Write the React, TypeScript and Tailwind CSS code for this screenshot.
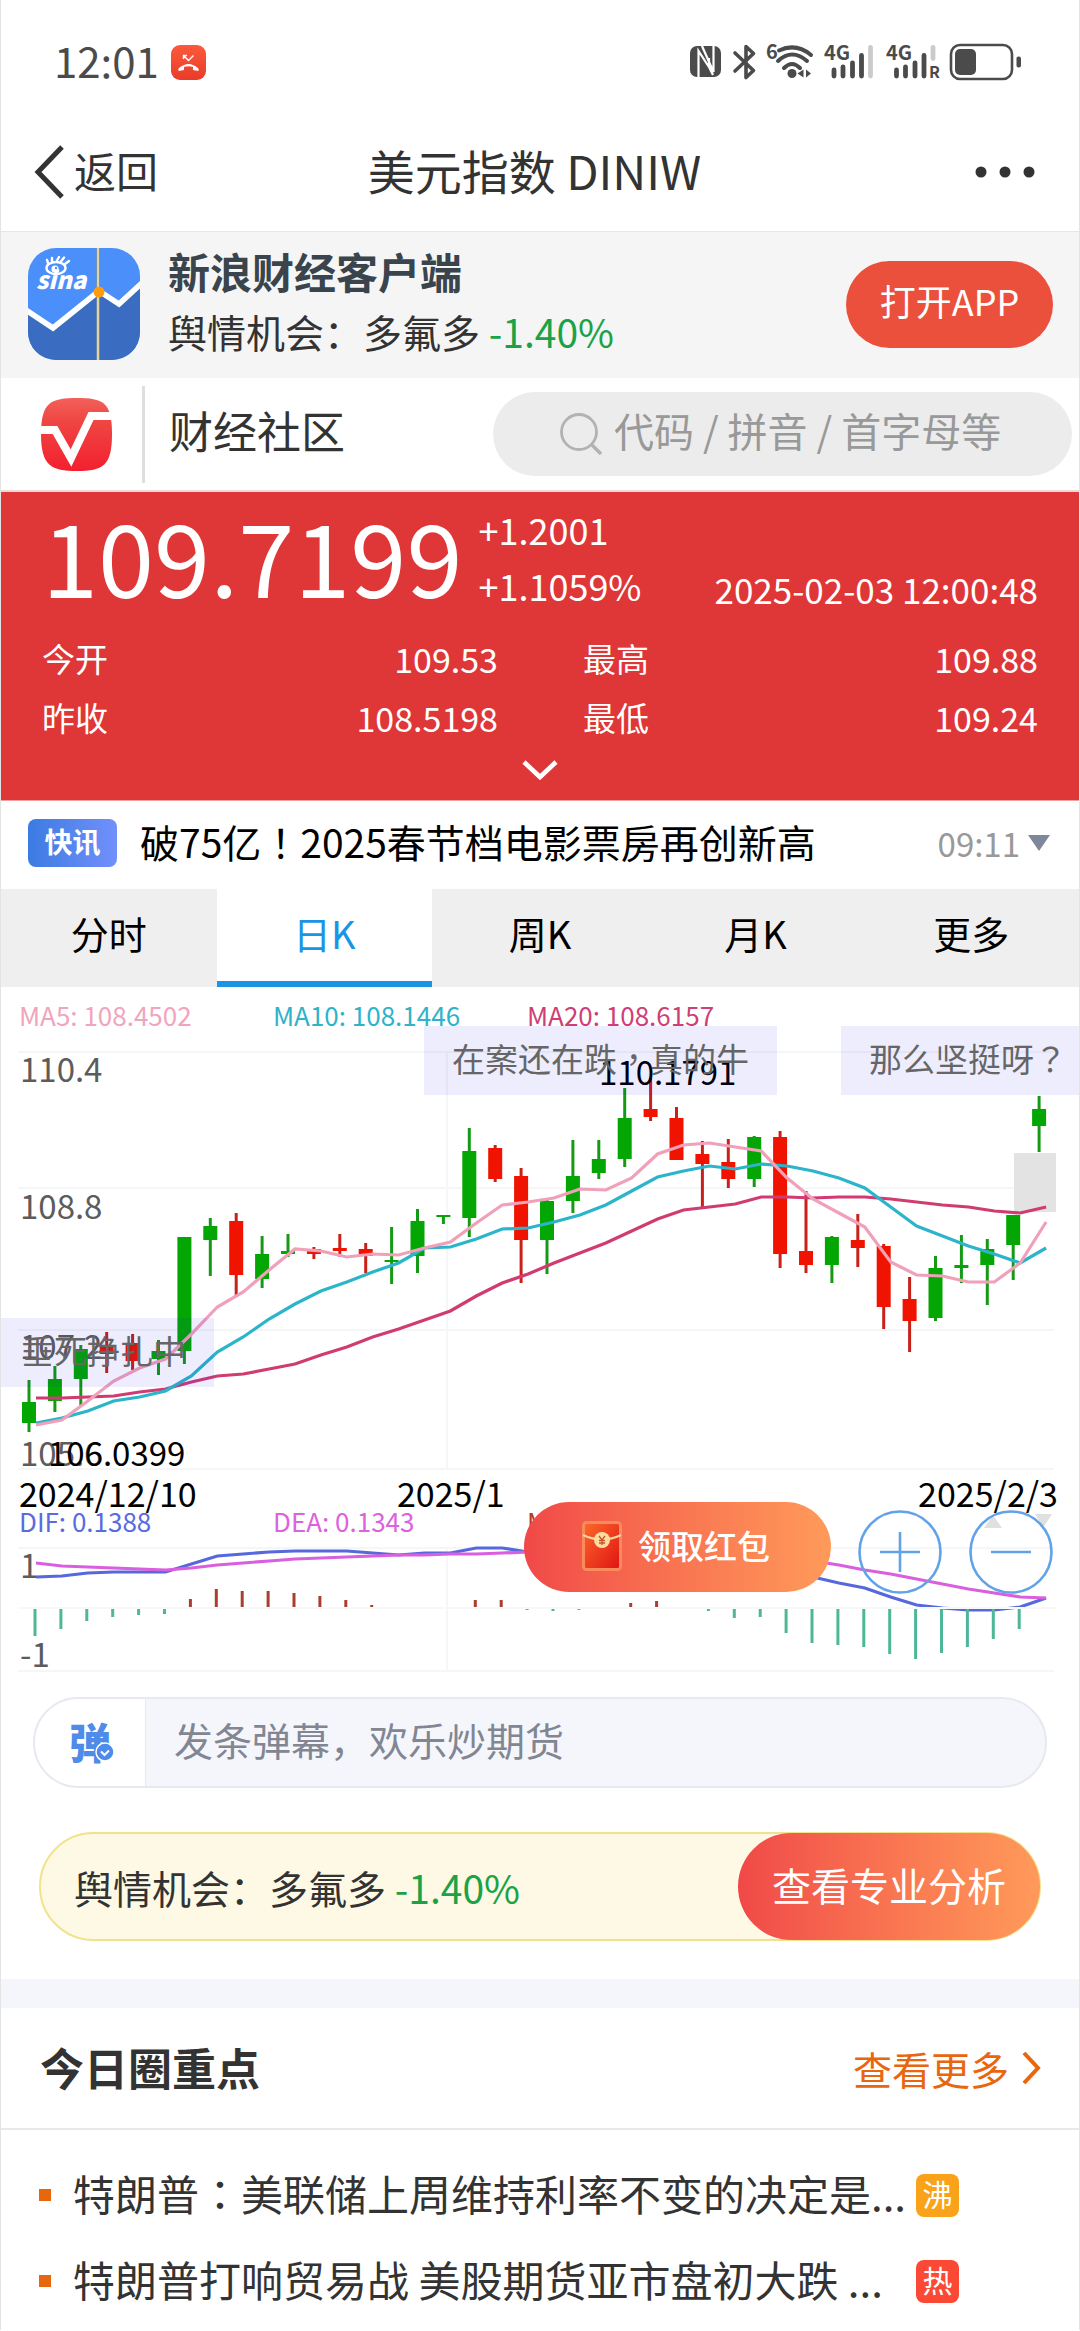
import { useState } from 'react';

type Candle = [color: 'up' | 'down', high: number, top: number, bottom: number, low: number];

const CANDLES: Candle[] = [
  ['up', 1380, 1402, 1423, 1432],
  ['up', 1366, 1379, 1401, 1412],
  ['up', 1345, 1349, 1379, 1405],
  ['down', 1332, 1345, 1354, 1373],
  ['down', 1334, 1343, 1361, 1370],
  ['up', 1340, 1351, 1359, 1375],
  ['up', 1237, 1237, 1351, 1364],
  ['up', 1218, 1226, 1240, 1276],
  ['down', 1213, 1221, 1275, 1297],
  ['up', 1236, 1254, 1279, 1288],
  ['up', 1234, 1251, 1254, 1257],
  ['down', 1247, 1249, 1254, 1259],
  ['down', 1234, 1248, 1251, 1257],
  ['down', 1243, 1249, 1256, 1273],
  ['up', 1227, 1260, 1262, 1284],
  ['up', 1209, 1221, 1256, 1273],
  ['up', 1215, 1215, 1217, 1224],
  ['up', 1128, 1151, 1218, 1237],
  ['down', 1145, 1148, 1179, 1182],
  ['down', 1168, 1176, 1240, 1283],
  ['up', 1200, 1201, 1240, 1274],
  ['up', 1140, 1176, 1201, 1213],
  ['up', 1140, 1159, 1173, 1179],
  ['up', 1088, 1118, 1159, 1167],
  ['down', 1078, 1109, 1117, 1121],
  ['down', 1107, 1118, 1160, 1160],
  ['down', 1141, 1154, 1164, 1208],
  ['down', 1139, 1162, 1179, 1188],
  ['up', 1136, 1137, 1179, 1187],
  ['down', 1131, 1137, 1254, 1268],
  ['down', 1191, 1251, 1265, 1273],
  ['up', 1236, 1237, 1265, 1283],
  ['down', 1214, 1240, 1248, 1267],
  ['down', 1244, 1246, 1307, 1329],
  ['down', 1277, 1299, 1321, 1352],
  ['up', 1256, 1268, 1318, 1321],
  ['up', 1235, 1265, 1268, 1283],
  ['up', 1239, 1249, 1265, 1305],
  ['up', 1215, 1215, 1245, 1280],
  ['up', 1096, 1109, 1126, 1152],
];

const MA5 = [1425, 1420, 1401, 1381, 1368, 1359, 1334, 1307, 1292, 1270, 1249, 1251, 1257, 1254, 1255, 1248, 1242, 1223, 1205, 1202, 1198, 1189, 1190, 1178, 1154, 1145, 1143, 1147, 1151, 1178, 1199, 1213, 1227, 1262, 1275, 1276, 1282, 1282, 1263, 1222];
const MA10 = [1423, 1418, 1411, 1401, 1397, 1391, 1376, 1352, 1337, 1319, 1304, 1291, 1282, 1272, 1263, 1248, 1247, 1239, 1229, 1228, 1222, 1215, 1205, 1191, 1177, 1171, 1166, 1169, 1164, 1166, 1171, 1178, 1188, 1207, 1226, 1236, 1246, 1254, 1263, 1248];
const MA20 = [1398, 1398, 1397, 1396, 1392, 1389, 1382, 1376, 1374, 1369, 1364, 1355, 1347, 1337, 1329, 1320, 1311, 1296, 1283, 1274, 1263, 1253, 1243, 1231, 1219, 1210, 1207, 1204, 1197, 1197, 1198, 1197, 1197, 1199, 1202, 1205, 1207, 1211, 1213, 1207];
const DIF = [1577, 1576, 1573, 1572, 1572, 1572, 1564, 1556, 1554, 1552, 1551, 1551, 1551, 1553, 1555, 1553, 1553, 1548, 1548, 1552, 1555, 1558, 1556, 1554, 1553, 1554, 1556, 1560, 1564, 1571, 1577, 1583, 1588, 1597, 1605, 1608, 1610, 1610, 1607, 1598];
const DEA = [1563, 1566, 1567, 1568, 1569, 1570, 1568, 1565, 1563, 1561, 1559, 1558, 1557, 1556, 1555, 1555, 1554, 1554, 1553, 1552, 1552, 1552, 1552, 1553, 1553, 1554, 1554, 1555, 1556, 1558, 1561, 1565, 1570, 1574, 1579, 1584, 1589, 1593, 1597, 1598];
const MACD = [-27, -20, -12, -8, -6, -5, 8, 18, 16, 16, 14, 11, 7, 2, 0, 0, 0, 7, 7, -1, -2, -1, 0, 4, 6, 0, -2, -9, -8, -24, -34, -36, -38, -45, -50, -44, -38, -30, -20, 0];

const STEP = 25.9;
const toPoints = (ys: number[]) => ys.map((y, i) => `${36 + i * STEP},${y}`).join(' ');

const TABS = ['分时', '日K', '周K', '月K', '更多'];

const NEWS = [
  { title: '特朗普：美联储上周维持利率不变的决定是...', tag: '沸', tagClass: 'bg-[#f9a21a]' },
  { title: '特朗普打响贸易战 美股期货亚市盘初大跌 ...', tag: '热', tagClass: 'bg-[#fb4936]' },
];

function StatusIcons() {
  return (
    <svg width="334" height="56" viewBox="0 -8 334 56" fill="none" aria-hidden="true">
      {/* NFC */}
      <rect x="1" y="4" width="31" height="31" rx="7" fill="#4b4b4b" />
      <path d="M9.500 35V9L20 25V16M13 4l11.500 26V4M20 25l4 8" stroke="#fff" strokeWidth="2.200" />
      {/* Bluetooth */}
      <path d="M46 11l18.500 17.500L57 35.500V4.500l7.500 7L46 29" stroke="#4b4b4b" strokeWidth="3.600" strokeLinejoin="round" strokeLinecap="round" />
      {/* Wi-Fi */}
      <text x="77" y="17" fontSize="20" fontWeight="700" fill="#4b4b4b">6</text>
      <path d="M90 8.500q17-8 32 4.500M89 19q14-13 29 0M95 26q8-8 16 0" stroke="#4b4b4b" strokeWidth="4" strokeLinecap="round" />
      <circle cx="103" cy="31.500" r="4.500" fill="#4b4b4b" />
      <path d="M108.500 31.500l6-4v8zM122 31.500l-5-4v8z" fill="#4b4b4b" />
      {/* Signal 1 */}
      <text x="135" y="18" fontSize="20" fontWeight="700" fill="#4b4b4b">4G</text>
      <path d="M145 28v6M154 25v9M163.500 21v13M172.500 13.500v20.500" stroke="#4b4b4b" strokeWidth="4.800" strokeLinecap="round" />
      <path d="M181.500 5.500v28.500" stroke="#cbcbcb" strokeWidth="4.800" strokeLinecap="round" />
      {/* Signal 2 */}
      <text x="197" y="18" fontSize="20" fontWeight="700" fill="#4b4b4b">4G</text>
      <path d="M207.500 28v6M216.500 25v9M226 21v13M235 13.500v20.500" stroke="#4b4b4b" strokeWidth="4.800" strokeLinecap="round" />
      <path d="M244 5.500v11" stroke="#cbcbcb" strokeWidth="4.800" strokeLinecap="round" />
      <text x="240" y="36" fontSize="16" fontWeight="700" fill="#4b4b4b">R</text>
      {/* Battery */}
      <rect x="262" y="3" width="61" height="34" rx="9" stroke="#4b4b4b" strokeWidth="2.600" />
      <rect x="266" y="7" width="21" height="26" rx="5" fill="#4b4b4b" />
      <rect x="327.500" y="14.500" width="4.500" height="11" rx="2" fill="#4b4b4b" />
    </svg>
  );
}

function MissedCallIcon() {
  return (
    <svg width="35" height="35" viewBox="0 0 35 35" fill="none" aria-hidden="true">
      <defs>
        <linearGradient id="call" x1="0" y1="0" x2="0" y2="1">
          <stop offset="0" stopColor="#fc5a3c" />
          <stop offset="1" stopColor="#e83c28" />
        </linearGradient>
      </defs>
      <rect width="35" height="35" rx="9" fill="url(#call)" />
      <path d="M12.500 10.500l5 5 5-5M12.500 14v-3.500H16" stroke="#fff" strokeWidth="1.400" />
      <path d="M7.500 26v-2.500q10-9 20 0V26l-5.500-1v-3q-4.500-1.300-9 0v3z" fill="#fff" />
    </svg>
  );
}

function SinaFinanceLogo() {
  return (
    <svg className="shrink-0" width="112" height="112" viewBox="0 0 112 112" fill="none" role="img" aria-label="新浪财经">
      <defs>
        <clipPath id="appIcon">
          <rect width="112" height="112" rx="28" />
        </clipPath>
      </defs>
      <g clipPath="url(#appIcon)">
        <rect width="112" height="112" fill="#4b8ffb" />
        <path d="M0 63l25 17 45-36 21 14 21-20v74H0z" fill="#3a6dc2" />
        <path d="M-2 62l27 18 46-37 20 13 23-21" stroke="#fff" strokeWidth="5.500" />
        <path d="M70 0v112" stroke="#7f93a0" strokeWidth="3.400" />
        <path d="M70 0v112" stroke="#ecdf9f" strokeWidth="1.800" />
        <circle cx="71" cy="44" r="5.500" fill="#ff9c0c" />
      </g>
      <text x="8" y="41" fontSize="24" fontWeight="900" fontStyle="italic" fill="#fff">sina</text>
      <ellipse cx="28" cy="20" rx="9.500" ry="6" stroke="#fff" strokeWidth="2.400" />
      <circle cx="27" cy="21" r="3.600" fill="#fff" />
      <circle cx="28" cy="20" r="1.200" fill="#4b8ffb" />
      <path d="M20 15l-1-3M24 13v-3M29 12.500l2-3.500M33 13.500l3-4M37 16l4-3" stroke="#fff" strokeWidth="2.400" strokeLinecap="round" />
    </svg>
  );
}

function CommunityLogo() {
  return (
    <svg className="shrink-0" width="71" height="73" viewBox="0 0 71 73" fill="none" role="img" aria-label="股市">
      <defs>
        <linearGradient id="community" x1="0" y1="0" x2="0" y2="1">
          <stop offset="0" stopColor="#f4605a" />
          <stop offset="0.300" stopColor="#ef4744" />
          <stop offset="1" stopColor="#f3202f" />
        </linearGradient>
      </defs>
      <path d="M36 0c26 0 35 4 35 36s-9 37-35 37S0 68 0 36 10 0 36 0z" fill="url(#community)" />
      <path d="M0 32h14l16 28 20-42h21" stroke="#fff" strokeWidth="8" />
    </svg>
  );
}

function RedPacketIcon() {
  return (
    <svg width="40" height="50" viewBox="0 0 40 50" fill="none" aria-hidden="true">
      <defs>
        <linearGradient id="packet" x1="0" y1="0" x2="1" y2="1">
          <stop offset="0" stopColor="#fb6a2c" />
          <stop offset="1" stopColor="#e01212" />
        </linearGradient>
      </defs>
      <rect x="1.500" y="1.500" width="37" height="47" rx="3" fill="url(#packet)" stroke="#f98a5c" strokeWidth="3" />
      <path d="M1 14q19 9 38 0" stroke="#fbd79c" strokeWidth="2" />
      <circle cx="20" cy="19" r="8" fill="#fbdc9f" />
      <path d="M17 15l3 4 3-4M20 19v5M17 19.500h6M17 22h6" stroke="#c8542c" strokeWidth="1.300" />
    </svg>
  );
}

function KLineChart() {
  return (
    <svg className="block w-full" viewBox="0 987 1080 686" fill="none" role="img" aria-label="美元指数日K线">
      <g stroke="#f4f6f7" strokeWidth="2">
        <path d="M18 1052H1054M18 1188H1054M18 1330H1054M18 1469H1054M447 1052V1469" />
        <path d="M18 1548H1054M18 1671H1054M447 1548V1671" />
      </g>

      <g fontSize="26">
        <text x="19" y="1026" fill="#f0a5bc">MA5: 108.4502</text>
        <text x="273" y="1026" fill="#2eb3c9">MA10: 108.1446</text>
        <text x="527" y="1026" fill="#cf3f75">MA20: 108.6157</text>
        <text x="19" y="1532" fill="#5a6be0">DIF: 0.1388</text>
        <text x="273" y="1532" fill="#dc62e0">DEA: 0.1343</text>
        <text x="527" y="1532" fill="#b23a2e">MACD: 0.0090</text>
      </g>

      <g fontSize="33" fill="#5c5c5c">
        <text x="20" y="1082">110.4</text>
        <text x="20" y="1219">108.8</text>
        <text x="20" y="1359">107.2</text>
        <text x="20" y="1466">105.6</text>
        <text x="20" y="1578">1</text>
        <text x="20" y="1667">-1</text>
      </g>

      <rect x="1014" y="1153" width="42" height="59" fill="#e3e3e3" />

      {CANDLES.map(([color, high, top, bottom, low], i) => {
        const x = 29 + i * STEP;
        return (
          <g key={i}>
            <path d={`M${x} ${high}V${low}`} stroke={color === 'up' ? '#169a16' : '#c9211a'} strokeWidth="3" />
            <rect x={x - 7} y={top} width="14" height={bottom - top} fill={color === 'up' ? '#03a603' : '#f01400'} />
          </g>
        );
      })}

      <g strokeWidth="3.200">
        <polyline points={toPoints(MA20)} stroke="#d03c72" />
        <polyline points={toPoints(MA10)} stroke="#2cb4ca" />
        <polyline points={toPoints(MA5)} stroke="#f0a0b8" />
        <polyline points={toPoints(DIF)} stroke="#5768dc" />
        <polyline points={toPoints(DEA)} stroke="#d95fe0" />
      </g>

      <path d="M18 1608H1056" stroke="#f7f8f8" strokeWidth="2" />
      {MACD.map((value, i) => {
        if (value === 0) return null;
        const x = 35 + i * STEP;
        return value > 0 ? (
          <path key={i} d={`M${x} 1607v${-value}`} stroke="#a93f2e" strokeWidth="3" />
        ) : (
          <path key={i} d={`M${x} 1609v${-value}`} stroke="#4db797" strokeWidth="3" />
        );
      })}

      <g fontSize="33" fill="#000">
        <text x="599" y="1085">110.1791</text>
        <text x="48" y="1466">106.0399</text>
      </g>
      <g fontSize="34" fill="#000">
        <text x="19" y="1507">2024/12/10</text>
        <text x="397" y="1507">2025/1</text>
        <text x="1058" y="1507" textAnchor="end">2025/2/3</text>
      </g>
      <path d="M984 1528h18l-9-13zM1035 1514h17l-9 14z" fill="#e0e0e0" />
    </svg>
  );
}

function QuoteItem({ label, value }: { label: string; value: string }) {
  return (
    <div className="flex flex-1 items-center justify-between">
      <dt className="text-[33px]">{label}</dt>
      <dd className="text-[34px]">{value}</dd>
    </div>
  );
}

function Opinion() {
  return (
    <p className="text-[39px] leading-[48px] text-[#333]">
      舆情机会：多氟多 <span className="text-[#1aa346]">-1.40%</span>
    </p>
  );
}

export default function App() {
  const [tab, setTab] = useState('日K');

  return (
    <div className="overflow-hidden border-x border-[#e4e4e4] bg-white font-['Noto_Sans_CJK_SC',sans-serif] text-[#333]">
      {/* Status bar */}
      <div className="flex h-[124px] items-center justify-between pr-[56px] pl-[53px]">
        <div className="flex items-center gap-3 text-[#4b4b4b]">
          <span className="pb-1 text-[42px] leading-none">12:01</span>
          <MissedCallIcon />
        </div>
        <StatusIcons />
      </div>

      {/* Title bar */}
      <header className="grid h-[108px] grid-cols-3 items-center border-b border-[#e6e6e6] pr-[44px] pb-3 pl-[33px]">
        <button type="button" className="flex items-center gap-2 text-[42px] leading-none">
          <svg width="32" height="54" viewBox="0 0 32 54" fill="none" aria-hidden="true">
            <path d="M28 2L4 27l24 25" stroke="#333" strokeWidth="5" />
          </svg>
          <span className="pb-1">返回</span>
        </button>
        <h1 className="pb-1 text-center text-[47px] leading-none whitespace-nowrap">美元指数 DINIW</h1>
        <button type="button" aria-label="更多操作" className="justify-self-end">
          <svg width="60" height="12" viewBox="0 0 60 12" fill="#333" aria-hidden="true">
            <circle cx="6" cy="6" r="5.500" />
            <circle cx="30" cy="6" r="5.500" />
            <circle cx="54" cy="6" r="5.500" />
          </svg>
        </button>
      </header>

      {/* App banner */}
      <section className="flex h-[146px] items-center bg-[#f5f5f5] pr-[26px] pb-[2px] pl-[27px]">
        <SinaFinanceLogo />
        <div className="ml-[28px] flex flex-1 flex-col gap-[12px] pb-[6px]">
          <h2 className="text-[42px] leading-[48px] font-bold text-[#3a444c]">新浪财经客户端</h2>
          <Opinion />
        </div>
        <button type="button" className="h-[87px] w-[207px] rounded-full bg-[#eb503c] pb-2 text-[36px] leading-none text-white">
          打开APP
        </button>
      </section>

      {/* Community + search */}
      <section className="flex h-[114px] items-center border-b-2 border-[#ecd9d6] pr-[7px] pl-[40px]">
        <CommunityLogo />
        <div className="ml-[30px] h-[97px] w-[3px] bg-[#dedede]" />
        <a href="#community" className="ml-[24px] pb-2 text-[44px] leading-none">财经社区</a>
        <label className="ml-auto flex h-[84px] w-[579px] items-center gap-3 rounded-full bg-[#ececec] pl-[67px]">
          <svg className="shrink-0" width="42" height="42" viewBox="0 0 42 42" fill="none" aria-hidden="true">
            <circle cx="19" cy="19" r="17.500" stroke="#b2b2b2" strokeWidth="2.800" />
            <path d="M31 31l10 10" stroke="#b2b2b2" strokeWidth="3.400" />
          </svg>
          <input
            type="search"
            aria-label="搜索"
            placeholder="代码 / 拼音 / 首字母等"
            className="h-[68px] w-full bg-transparent pb-2 text-[40px] outline-none placeholder:text-[#999]"
          />
        </label>
      </section>

      {/* Quote */}
      <section className="h-[309px] border-b border-[#f0a0a0] bg-[#df3638] px-[41px] pt-[15px] text-white">
        <div className="flex h-[106px] items-center">
          <strong className="pb-3 text-[101px] leading-none font-normal">109.7199</strong>
          <div className="ml-[16px] flex flex-col pb-[6px] text-[36px] leading-[56px]">
            <span>+1.2001</span>
            <span>+1.1059%</span>
          </div>
          <time className="ml-auto self-end text-[35px] leading-[48px] whitespace-nowrap">2025-02-03 12:00:48</time>
        </div>
        <dl className="mt-[16px] grid grid-cols-[456px_1fr] gap-x-[85px] leading-[59px]">
          <QuoteItem label="今开" value="109.53" />
          <QuoteItem label="最高" value="109.88" />
          <QuoteItem label="昨收" value="108.5198" />
          <QuoteItem label="最低" value="109.24" />
        </dl>
        <button type="button" aria-label="展开" className="mx-auto mt-[12px] block">
          <svg width="36" height="22" viewBox="0 0 36 22" fill="none" aria-hidden="true">
            <path d="M2 3l16 15L34 3" stroke="#fff" strokeWidth="4.600" />
          </svg>
        </button>
      </section>

      {/* Flash news */}
      <section className="flex h-[88px] items-center pr-[29px] pb-1 pl-[27px]">
        <span className="flex h-[48px] w-[89px] shrink-0 items-center justify-center rounded-lg bg-linear-to-r from-[#3a7be2] to-[#7190fb] pb-1 text-[28px] leading-none font-bold text-white">
          快讯
        </span>
        <a
          href="#flash"
          className="ml-[23px] flex-1 pb-1 font-['Noto_Sans_CJK_TC',sans-serif] text-[39px] leading-none whitespace-nowrap text-black"
        >
          破75亿！2025春节档电影票房再创新高
        </a>
        <time className="text-[33px] leading-none text-[#999]">09:11</time>
        <svg className="ml-2" width="22" height="16" viewBox="0 0 22 16" aria-hidden="true">
          <path d="M0 0h22L11 16z" fill="#7f879b" />
        </svg>
      </section>

      {/* Tabs */}
      <nav className="grid h-[98px] grid-cols-5 bg-[#efefef]">
        {TABS.map((name) => (
          <button
            key={name}
            type="button"
            onClick={() => setTab(name)}
            className={
              name === tab
                ? 'border-b-[6px] border-[#1a95e5] bg-white pb-1 text-[38px] leading-none text-[#1a95e5]'
                : 'border-b-[6px] border-[#efefef] pb-1 text-[38px] leading-none text-black'
            }
          >
            {name}
          </button>
        ))}
      </nav>

      {/* Chart */}
      <section className="relative -mx-px overflow-hidden">
        <KLineChart />

        <div className="font-['Noto_Sans_CJK_TC',sans-serif] text-[33px] leading-[65px] whitespace-nowrap text-[#666]">
          <span className="absolute top-[39px] left-[424px] bg-[#0000f0]/7 px-[28px] pb-1">在案还在跌，真的牛</span>
          <span className="absolute top-[39px] left-[841px] bg-[#0000f0]/7 px-[28px] pb-1">那么坚挺呀？</span>
          <span className="absolute top-[331px] -left-[7px] bg-[#0000f0]/7 px-[28px] pb-1">垂死挣扎中</span>
        </div>

        <button
          type="button"
          className="absolute top-[515px] left-[524px] flex h-[90px] w-[307px] items-center gap-4 rounded-full bg-linear-to-r from-[#f04848] to-[#ff9a5a] pb-[2px] pl-[58px] text-[33px] leading-none text-white"
        >
          <RedPacketIcon />
          <span className="pb-[2px] font-medium">领取红包</span>
        </button>

        <div className="absolute top-[523px] right-[27px] flex gap-[27px]">
          <button type="button" aria-label="放大">
            <svg width="84" height="84" viewBox="0 0 84 84" fill="none" stroke="#62a3e8" strokeWidth="2.600" aria-hidden="true">
              <circle cx="42" cy="42" r="40.500" />
              <path d="M22 42h40M42 22v40" />
            </svg>
          </button>
          <button type="button" aria-label="缩小">
            <svg width="84" height="84" viewBox="0 0 84 84" fill="none" stroke="#62a3e8" strokeWidth="2.600" aria-hidden="true">
              <circle cx="42" cy="42" r="40.500" />
              <path d="M22 42h40" />
            </svg>
          </button>
        </div>
      </section>

      {/* Bullet comment box */}
      <label className="mx-[32px] mt-[24px] flex h-[91px] items-center overflow-hidden rounded-full border-2 border-[#e7e9f0] bg-[#f5f6fb]">
        <span className="flex h-full w-[111px] shrink-0 items-center justify-center border-r border-[#e7e9f0] bg-white">
          <span className="relative pb-1 text-[42px] leading-none font-black text-[#4f8be8]">
            弹
            <svg className="absolute -right-1 bottom-1" width="20" height="20" viewBox="0 0 20 20" fill="none" aria-hidden="true">
              <circle cx="10" cy="10" r="9" fill="#4f8be8" stroke="#fff" strokeWidth="1.500" />
              <path d="M6 9.500l3.500 3.500L14 8.500" stroke="#fff" strokeWidth="2" />
            </svg>
          </span>
        </span>
        <input
          type="text"
          aria-label="发弹幕"
          placeholder="发条弹幕，欢乐炒期货"
          className="h-[68px] w-full bg-transparent pb-2 pl-[28px] text-[39px] outline-none placeholder:text-[#828693]"
        />
      </label>

      {/* Promo */}
      <section className="mx-[38px] mt-[44px] flex h-[109px] items-center justify-between rounded-full border-2 border-[#f1e28c] bg-[#fef9e5] pl-[33px]">
        <Opinion />
        <a
          href="#analysis"
          className="-my-px -mr-px flex h-[107px] w-[302px] items-center justify-center rounded-full bg-linear-to-r from-[#f04848] to-[#ff9a5a] pb-1 text-[39px] leading-none text-white"
        >
          查看专业分析
        </a>
      </section>

      {/* Highlights */}
      <section className="mt-[38px] border-t-[29px] border-[#f5f6fb]">
        <div className="flex h-[122px] items-center justify-between border-b-2 border-[#e8e8e8] pr-[37px] pl-[39px]">
          <h2 className="pb-[2px] text-[44px] leading-none font-bold">今日圈重点</h2>
          <a href="#more" className="flex items-center gap-3 text-[39px] leading-none text-[#e8660e]">
            查看更多
            <svg width="21" height="32" viewBox="0 0 21 32" fill="none" aria-hidden="true">
              <path d="M3 1l14 15L3 31" stroke="#e8660e" strokeWidth="4" />
            </svg>
          </a>
        </div>
        <ul className="h-[200px] overflow-hidden pt-[22px] pl-[38px]">
          {NEWS.map((item) => (
            <li key={item.tag} className="flex h-[86px] items-center">
              <span className="size-[12px] shrink-0 bg-[#e8660e]" />
              <a
                href="#news"
                className="ml-[22px] w-[840px] overflow-hidden pb-1 font-['Noto_Sans_CJK_TC',sans-serif] text-[42px] leading-[60px] whitespace-nowrap"
              >
                {item.title}
              </a>
              <span className={`ml-[3px] flex size-[43px] items-center justify-center rounded-lg pb-1 text-[30px] leading-none text-white ${item.tagClass}`}>
                {item.tag}
              </span>
            </li>
          ))}
        </ul>
      </section>
    </div>
  );
}
